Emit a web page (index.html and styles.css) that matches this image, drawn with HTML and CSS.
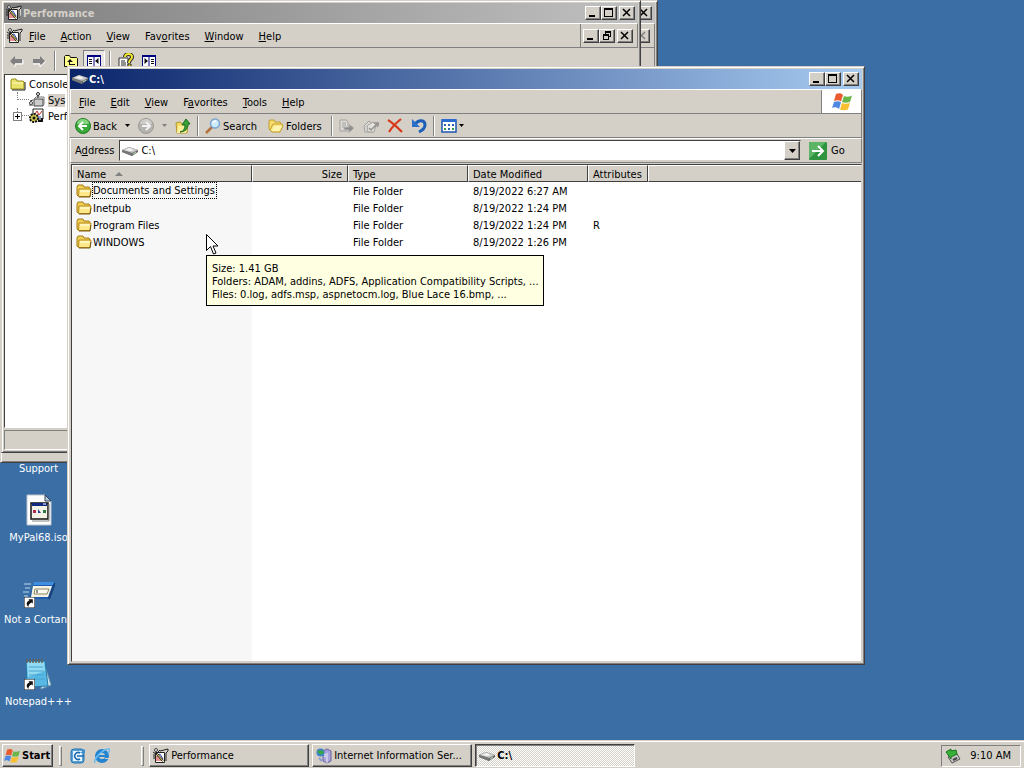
FILE: index.html
```html
<!DOCTYPE html>
<html lang="en">
  <head>
    <meta charset="UTF-8" />
    <meta name="viewport" content="width=device-width, initial-scale=1.0" />
    <title>C:\</title>
    <link rel="stylesheet" href="styles.css">
  </head>
  <body>
    <svg class="sprites" aria-hidden="true">
      <symbol id="min" viewBox="0 0 12 10"><path d="M2 7h6v2H2z" fill="currentColor" /></symbol>
      <symbol id="max" viewBox="0 0 12 10"><path d="M1 0h9v9H1zM2 2v6h7V2z" fill="currentColor" fill-rule="evenodd" /></symbol>
      <symbol id="restore" viewBox="0 0 12 10"><path d="M4 0h6v6H8v3H2V3h2zM5 2v1h3v2h1V2zM3 5v3h4V5z" fill="currentColor" fill-rule="evenodd" /></symbol>
      <symbol id="close" viewBox="0 0 12 10"><path d="M2 1l7 7M9 1L2 8" stroke="currentColor" stroke-width="1.500" /></symbol>
      <symbol id="down" viewBox="0 0 7 4"><path d="M0 0h7L3.500 4z" fill="currentColor" /></symbol>

      <symbol id="perf" viewBox="0 0 16 16">
        <path d="M4 3h8l3-2v9l-3 4z" fill="#d8d4cc" />
        <path d="M2.500 4.500h9v10h-9z" fill="#fff" stroke="#222" />
        <path d="M4 13V8h2v5M8 13v-3" fill="none" stroke="#d02020" />
        <path d="M4 7l3-1 3 5" fill="none" stroke="#3348b0" />
        <path d="M3 5l7 8" stroke="#222" stroke-width="2" />
        <path d="M4 6l6 7" stroke="#f0e060" />
        <path d="M0 4l3 2 2-2 2-2M1 11V6" fill="none" stroke="#222" />
        <circle cx="3" cy="2" r="1.500" fill="#eee" stroke="#444" />
        <path d="M7 3l4-1 4-1v2l-2 2v8" fill="none" stroke="#222" />
      </symbol>
      <symbol id="drive" viewBox="0 0 16 16">
        <path d="M0 7l7-3 9 3v2l-6 4-10-4z" fill="#666" />
        <path d="M0 7l7-3 9 3-6 3z" fill="#c6c6c6" />
        <path d="M3 7l4-2 5 2-3 1z" fill="#f6f6f6" />
        <path d="M0 7l10 3v3L0 9z" fill="#777" />
        <path d="M11 11l3-2" stroke="#bfe0bf" />
      </symbol>
      <symbol id="folder" viewBox="0 0 16 16">
        <path d="M1 12V4l1-2h5l1 2h5l1 2v7H2z" fill="#f0cf55" stroke="#a67c15" />
        <path d="M3 6h12l-1 7.500H2.500z" fill="#ffe88a" stroke="#b58a1d" />
        <path d="M4 7h10l-.3 2H4z" fill="#fff6bd" />
        <path d="M3 14h11l1-6" fill="none" stroke="#7a5a10" />
      </symbol>
      <symbol id="console" viewBox="0 0 16 16">
        <path d="M1 13V4l1-1h4l1 2h6l1 1v7z" fill="#e9e36b" stroke="#9a8c12" />
        <path d="M2 7h11" stroke="#fffcc0" />
        <path d="M2 14h13V6" fill="none" stroke="#222" />
      </symbol>
      <symbol id="monitor" viewBox="0 0 16 16">
        <path d="M5 7h9v7H5z" fill="#ccc" stroke="#444" />
        <path d="M5 7l2-2h8v7l-1 2" fill="none" stroke="#777" />
        <path d="M9 6V3" stroke="#222" />
        <circle cx="9" cy="2" r="1.500" fill="#fff" stroke="#222" />
        <path d="M1 9l3-1M0 13h4" stroke="#444" />
        <circle cx="2" cy="11" r="1.500" fill="#fff" stroke="#444" />
      </symbol>
      <symbol id="logs" viewBox="0 0 16 16">
        <path d="M4 1h10v10H4z" fill="#fff" stroke="#222" />
        <path d="M6 6l2-3 2 4 3-4" fill="none" stroke="#c22" />
        <path d="M6 9h6" stroke="#24c" />
        <circle cx="5" cy="10" r="4" fill="#d0c850" stroke="#111" stroke-width="2" stroke-dasharray="2 1" />
        <circle cx="5" cy="10" r="1.500" fill="#111" />
        <path d="M9 13h4v-3" fill="none" stroke="#111" stroke-width="2" />
      </symbol>
      <symbol id="larrow" viewBox="0 0 16 16"><path d="M2 8l5-5v3h7v4H7v3z" fill="#808080" /><path d="M7 14v-3h8V7" fill="none" stroke="#fff" /></symbol>
      <symbol id="rarrow" viewBox="0 0 16 16"><path d="M14 8L9 3v3H2v4h7v3z" fill="#808080" /><path d="M2 11h7v3l6-6" fill="none" stroke="#fff" /></symbol>
      <symbol id="upfolder" viewBox="0 0 16 16">
        <path d="M1.500 13.500v-10l1-1h4l1 2h6l1 1v8z" fill="#ffff8c" stroke="#111" />
        <path d="M6 12V9H4l3-3 3 3H7v2h5v1z" fill="#111" />
      </symbol>
      <symbol id="pane" viewBox="0 0 16 16">
        <path d="M1.500 2.500h13v11h-13z" fill="#fff" stroke="#000080" />
        <path d="M1 3h14" stroke="#000080" stroke-width="2" />
        <path d="M8 3v10" stroke="#000080" />
        <path d="M3 6.500h3M3 8.500h3M3 10.500h3" stroke="#111" />
        <path d="M12.500 5v6L9 8z" fill="#111" />
      </symbol>
      <symbol id="pane2" viewBox="0 0 16 16">
        <path d="M1.500 2.500h13v11h-13z" fill="#fff" stroke="#000080" />
        <path d="M1 3h14" stroke="#000080" stroke-width="2" />
        <path d="M8 3v10" stroke="#000080" />
        <path d="M10 6.500h3M10 8.500h3M10 10.500h3" stroke="#111" />
        <path d="M3.500 5v6L7 8z" fill="#111" />
      </symbol>
      <symbol id="helpdoc" viewBox="0 0 16 16">
        <path d="M1 5h9v10H1z" fill="#fff" stroke="#333" />
        <path d="M3 8h4M3 10h5M3 12h5" stroke="#222" />
        <path d="M7 4c0-4 7-4 7 0 0 3-3 2-3 6" fill="none" stroke="#222" stroke-width="4" />
        <path d="M7 4c0-4 7-4 7 0 0 3-3 2-3 6" fill="none" stroke="#f2e62e" stroke-width="2" />
        <path d="M10 11h3v3h-3z" fill="#f2e62e" stroke="#222" />
      </symbol>

      <symbol id="back" viewBox="0 0 16 16">
        <circle cx="8" cy="8" r="7.500" fill="#38a838" stroke="#207a24" />
        <path d="M2 6a6 5 0 0 1 12 0z" fill="#83d47f" />
        <path d="M12 8H5m3-4L4 8l4 4" fill="none" stroke="#fff" stroke-width="2" />
      </symbol>
      <symbol id="forward" viewBox="0 0 16 16">
        <circle cx="8" cy="8" r="7.500" fill="#b5b3af" stroke="#9a9893" />
        <path d="M2 6a6 5 0 0 1 12 0z" fill="#cfcdca" />
        <path d="M4 8h7M8 4l4 4-4 4" fill="none" stroke="#f2f2f2" stroke-width="2" />
      </symbol>
      <symbol id="up" viewBox="0 0 16 16">
        <path d="M1 5l4-1 2 2 6-1-1 10H2z" fill="#f5da62" stroke="#b3922a" />
        <path d="M3 8l10-1-2 8H2z" fill="#fdf09c" />
        <path d="M5 14c4-1 5-4 5-7H7l4-6 4 5h-2c0 5-3 8-8 8z" fill="#36a436" stroke="#1a6a1c" />
      </symbol>
      <symbol id="search" viewBox="0 0 16 16">
        <path d="M1 15l6-6" stroke="#b5713d" stroke-width="2.500" />
        <circle cx="10" cy="5.500" r="4.500" fill="#cdebfb" stroke="#7ba5cc" stroke-width="1.500" />
        <path d="M8 5a3 3 0 0 1 3-2" fill="none" stroke="#fff" stroke-width="1.500" />
      </symbol>
      <symbol id="folders" viewBox="0 0 16 16">
        <path d="M1 11V3l1-1h4l1 2h5l1 2-3 7H3z" fill="#f7dd6c" stroke="#c29c2b" />
        <path d="M5 6h9l1 2-3 6H4L2 12z" fill="#fbe681" stroke="#c29c2b" />
        <path d="M6 8h8l-3 5H4z" fill="#fff5b0" />
      </symbol>
      <symbol id="moveto" viewBox="0 0 16 16">
        <path d="M1 2h6l2 2v9H1z" fill="#dedcd8" stroke="#a3a19c" />
        <path d="M3 5h4M3 7h4M3 9h3" stroke="#a3a19c" />
        <path d="M5 9h5V6l5 4-5 5v-3H5z" fill="#8f8d89" stroke="#bbb" />
      </symbol>
      <symbol id="copyto" viewBox="0 0 16 16">
        <path d="M1 8l5-5 4 3v8H2z" fill="#d9d7d3" stroke="#a3a19c" />
        <path d="M4 8l6-4 3 3-2 7H5z" fill="#e4e2de" stroke="#a3a19c" />
        <path d="M6 10l2 2 6-6M11 5h5l-2 4" fill="none" stroke="#918f8b" stroke-width="1.500" />
      </symbol>
      <symbol id="delete" viewBox="0 0 16 16">
        <path d="M1 2c5 3 10 8 14 12M14 1C9 5 5 9 2 14" fill="none" stroke="#d8391a" stroke-width="2.200" />
      </symbol>
      <symbol id="undo" viewBox="0 0 16 16">
        <path d="M4 6c4-5 10-4 10 1 0 3-2 5-6 7" fill="none" stroke="#1c5fb8" stroke-width="3" />
        <path d="M1 1v8h8z" fill="#2a6fca" />
      </symbol>
      <symbol id="views" viewBox="0 0 16 16">
        <path d="M1 2h14v12H1z" fill="#fff" stroke="#1a55b0" stroke-width="1.500" />
        <path d="M1 1h14v3H1z" fill="#2a6cd0" />
        <path d="M3 6h2v2H3zM7 6h2v2H7zM11 6h2v2h-2zM7 10h2v2H7z" fill="#2d62b4" />
        <path d="M3 10h2v2H3zM11 10h2v2h-2z" fill="#3a9a4c" />
      </symbol>
      <symbol id="go" viewBox="0 0 18 18">
        <rect width="18" height="18" rx="1" fill="#2f9440" />
        <path d="M0 1l1-1h16L1 16H0z" fill="#5cb567" />
        <path d="M3 9h10M9 4l5 5-5 5" fill="none" stroke="#fff" stroke-width="2" />
      </symbol>
      <symbol id="flag" viewBox="0 0 20 18">
        <path d="M4 1c3-1 5-1 7 1L9 8.500C7 7 5 7 2 8z" fill="#ea5b30" />
        <path d="M12 3c2 1 5 1 8-.500L18 9c-3 1-6 1-8 0z" fill="#6ab648" />
        <path d="M2 9c3-1 5-1 7 .500L7 16c-2-2-5-2-7-1z" fill="#4f88e2" />
        <path d="M10 10c2 1 5 1 8 0l-2 6.500c-3 1-6 1-8 0z" fill="#f8c030" />
      </symbol>
      <symbol id="iis" viewBox="0 0 16 16">
        <path d="M7 3l4-2 4 2v10l-4 2-4-2z" fill="#a9a3dd" stroke="#69649c" />
        <path d="M11 5v10M8 6l2 1M8 8l2 1" stroke="#eee" />
        <circle cx="4.500" cy="4.500" r="4" fill="#3e83ce" />
        <path d="M1 4c2-4 4 0 6-2l1 3-3 2z" fill="#39a34a" />
        <path d="M3 10l3 3" stroke="#8a9cd0" stroke-width="2" />
      </symbol>
      <symbol id="outlook" viewBox="0 0 16 16">
        <rect x="1" y="1" width="13" height="14" rx="3" fill="#5aa2d8" stroke="#2673af" />
        <path d="M3 3h9v10H3z" fill="#e9f6ff" />
        <path d="M10 5a3.500 3.500 0 1 0 0 6M7 8h7" fill="none" stroke="#1d69ad" stroke-width="1.500" />
        <path d="M10 5l5-4v4z" fill="#3d8fcf" />
      </symbol>
      <symbol id="ie" viewBox="0 0 16 16">
        <circle cx="8" cy="8" r="5" fill="none" stroke="#2584d0" stroke-width="4" />
        <path d="M4 8h9" stroke="#2584d0" stroke-width="2" />
        <path d="M11 10h5v1h-5z" fill="#d4d0c8" />
        <path d="M1 15C-1 11 10 0 15 1c1 1 0 3-1 4" fill="none" stroke="#6cbcf0" stroke-width="1.500" />
      </symbol>
      <symbol id="eject" viewBox="0 0 16 16">
        <path d="M3 9l9-3 3 5-8 4z" fill="#c4c4c4" stroke="#555" />
        <path d="M8 12l4-2" stroke="#444" stroke-width="2" />
        <path d="M1 4l5-3v2l5-1 1 4-6 3v2z" fill="#37b137" stroke="#1c7420" />
      </symbol>
      <symbol id="iso" viewBox="0 0 32 32">
        <path d="M4 1h18l6 6v24H4z" fill="#fff" stroke="#bcc4cc" />
        <path d="M22 1v6h6z" fill="#b5c7d8" stroke="#345" />
        <path d="M8 9h17v16H8z" fill="#f5f3e6" stroke="#111" stroke-width="1.500" />
        <path d="M9 9h15v3H9z" fill="#102a80" />
        <path d="M20 10h3" stroke="#fff" />
        <path d="M10 16h3v3h-3z" fill="#b02858" /><path d="M15 15l3 4h-3z" fill="#243c9c" /><path d="M20 16h3v3h-3z" fill="#287a44" />
        <path d="M26 10v17H9" fill="none" stroke="#888" />
      </symbol>
      <symbol id="shortcut" viewBox="0 0 10 10">
        <path d="M0 0h10v10H0z" fill="#fff" stroke="#111" />
        <path d="M4 2h4v4L7 5C5 6 4 7 4 9 1 6 3 4 5 3z" fill="#111" />
      </symbol>
      <symbol id="run" viewBox="0 0 32 32">
        <path d="M11 6h21l-6 17H6z" fill="#1f5cae" />
        <path d="M11 6h20l-1 3H10z" fill="#408fe0" />
        <path d="M10 10h19l-4 11H8z" fill="#f5f3e4" />
        <path d="M12 13h14l-2 5H11z" fill="#fffdf1" stroke="#8b8660" />
        <path d="M14 14v3" stroke="#222" />
        <path d="M1 8h7M2 12h5M0 16h6M1 20h4" stroke="#bcd7f2" />
        <path d="M26 23l6-16" stroke="#183e72" stroke-width="2" />
        <use href="#shortcut" x="1" y="21" width="11" height="11" />
      </symbol>
      <symbol id="notepad" viewBox="0 0 32 32">
        <path d="M21 5l7 22-10 4z" fill="#d7ebf5" stroke="#789cb5" />
        <path d="M3 3h19l3 25-21 1z" fill="#58b8e4" stroke="#2878a4" />
        <path d="M4 4h17l1 9-17 6z" fill="#91daf2" />
        <path d="M6 9h14M6 13h15M6 17h15M6 21h16" stroke="#49a5d0" />
        <path d="M4 1v4m3-4v4m3-4v4m3-4v4m3-4v4m3-4v4" stroke="#6b5f58" stroke-width="1.500" />
        <use href="#shortcut" x="1" y="21" width="11" height="11" />
      </symbol>
    </svg>

    <main class="desktop">
      <a class="shortcut support" href="#">Support</a>
      <a class="shortcut mypal" href="#"><svg><use href="#iso" /></svg>MyPal68.iso</a>
      <a class="shortcut cortana" href="#"><svg><use href="#run" /></svg>Not a Cortana</a>
      <a class="shortcut npp" href="#"><svg><use href="#notepad" /></svg>Notepad+++</a>

      <section class="window behind">
        <header class="title">
          <div class="caption">
            <button aria-label="Close"><svg><use href="#close" /></svg></button>
          </div>
        </header>
        <div class="menubar">
          <div class="caption child">
            <button aria-label="Close child" disabled><svg><use href="#close" /></svg></button>
          </div>
        </div>
        <div class="fill"></div>
      </section>

      <section class="window performance">
        <header class="title">
          <svg class="icon"><use href="#perf" /></svg>
          <h2>Performance</h2>
          <div class="caption">
            <button aria-label="Minimize"><svg><use href="#min" /></svg></button>
            <button aria-label="Maximize"><svg><use href="#max" /></svg></button>
            <button aria-label="Close"><svg><use href="#close" /></svg></button>
          </div>
        </header>
        <nav class="menubar">
          <svg class="icon"><use href="#perf" /></svg>
          <button><span><u>F</u>ile</span></button>
          <button><span><u>A</u>ction</span></button>
          <button><span><u>V</u>iew</span></button>
          <button><span>Fav<u>o</u>rites</span></button>
          <button><span><u>W</u>indow</span></button>
          <button><span><u>H</u>elp</span></button>
          <div class="caption child">
            <button aria-label="Minimize child"><svg><use href="#min" /></svg></button>
            <button aria-label="Restore child"><svg><use href="#restore" /></svg></button>
            <button aria-label="Close child"><svg><use href="#close" /></svg></button>
          </div>
        </nav>
        <div class="tools">
          <button aria-label="Back"><svg class="icon"><use href="#larrow" /></svg></button>
          <button aria-label="Forward"><svg class="icon"><use href="#rarrow" /></svg></button>
          <i class="sep"></i>
          <button aria-label="Up"><svg class="icon"><use href="#upfolder" /></svg></button>
          <button class="pressed" aria-label="Console tree"><svg class="icon"><use href="#pane" /></svg></button>
          <i class="sep"></i>
          <button aria-label="Help"><svg class="icon"><use href="#helpdoc" /></svg></button>
          <button aria-label="Action pane"><svg class="icon"><use href="#pane2" /></svg></button>
        </div>
        <ul class="tree">
          <li><svg class="icon"><use href="#console" /></svg><span>Console</span></li>
          <li class="leaf selected"><svg class="icon"><use href="#monitor" /></svg><span>Sys</span></li>
          <li class="leaf"><button class="expand" aria-label="Expand"></button><svg class="icon"><use href="#logs" /></svg><span>Perf</span></li>
        </ul>
        <footer class="status"></footer>
      </section>

      <section class="window explorer">
        <header class="title active">
          <svg class="icon"><use href="#drive" /></svg>
          <h1>C:\</h1>
          <div class="caption">
            <button aria-label="Minimize"><svg><use href="#min" /></svg></button>
            <button aria-label="Maximize"><svg><use href="#max" /></svg></button>
            <button aria-label="Close"><svg><use href="#close" /></svg></button>
          </div>
        </header>
        <nav class="menubar">
          <button><span><u>F</u>ile</span></button>
          <button><span><u>E</u>dit</span></button>
          <button><span><u>V</u>iew</span></button>
          <button><span>F<u>a</u>vorites</span></button>
          <button><span><u>T</u>ools</span></button>
          <button><span><u>H</u>elp</span></button>
          <div class="brand"><svg><use href="#flag" /></svg></div>
        </nav>
        <div class="toolbar">
          <button><svg class="icon"><use href="#back" /></svg><span>Back</span></button>
          <button class="drop" aria-label="Back history"><svg class="arrow"><use href="#down" /></svg></button>
          <button aria-label="Forward"><svg class="icon"><use href="#forward" /></svg></button>
          <button class="drop" aria-label="Forward history" disabled><svg class="arrow"><use href="#down" /></svg></button>
          <button aria-label="Up"><svg class="icon"><use href="#up" /></svg></button>
          <i class="sep"></i>
          <button class="wide"><svg class="icon"><use href="#search" /></svg><span>Search</span></button>
          <button class="wide"><svg class="icon"><use href="#folders" /></svg><span>Folders</span></button>
          <i class="sep"></i>
          <button aria-label="Move to"><svg class="icon"><use href="#moveto" /></svg></button>
          <button aria-label="Copy to"><svg class="icon"><use href="#copyto" /></svg></button>
          <button aria-label="Delete"><svg class="icon"><use href="#delete" /></svg></button>
          <button aria-label="Undo"><svg class="icon"><use href="#undo" /></svg></button>
          <i class="sep"></i>
          <button class="views" aria-label="Views"><svg class="icon"><use href="#views" /></svg><svg class="arrow"><use href="#down" /></svg></button>
        </div>
        <form class="address">
          <label for="path">A<u>d</u>dress</label>
          <div class="combo">
            <svg class="icon"><use href="#drive" /></svg>
            <input id="path" type="text" value="C:\" />
            <button type="button" aria-label="Show addresses"><svg class="arrow"><use href="#down" /></svg></button>
          </div>
          <button class="go"><svg><use href="#go" /></svg>Go</button>
        </form>
        <div class="list">
          <table>
            <colgroup>
              <col class="c-name" /><col class="c-size" /><col class="c-type" /><col class="c-date" /><col class="c-attr" /><col />
            </colgroup>
            <thead>
              <tr><th>Name<i class="sort"></i></th><th class="num">Size</th><th>Type</th><th>Date Modified</th><th>Attributes</th><th></th></tr>
            </thead>
            <tbody>
              <tr><td><div class="file"><svg class="icon"><use href="#folder" /></svg><span class="focus">Documents and Settings</span></div></td><td></td><td>File Folder</td><td>8/19/2022 6:27 AM</td><td></td><td></td></tr>
              <tr><td><div class="file"><svg class="icon"><use href="#folder" /></svg><span>Inetpub</span></div></td><td></td><td>File Folder</td><td>8/19/2022 1:24 PM</td><td></td><td></td></tr>
              <tr><td><div class="file"><svg class="icon"><use href="#folder" /></svg><span>Program Files</span></div></td><td></td><td>File Folder</td><td>8/19/2022 1:24 PM</td><td>R</td><td></td></tr>
              <tr><td><div class="file"><svg class="icon"><use href="#folder" /></svg><span>WINDOWS</span></div></td><td></td><td>File Folder</td><td>8/19/2022 1:26 PM</td><td></td><td></td></tr>
            </tbody>
          </table>
        </div>
      </section>

      <div class="tooltip" role="tooltip">
        Size: 1.41 GB<br />
        Folders: ADAM, addins, ADFS, Application Compatibility Scripts, ...<br />
        Files: 0.log, adfs.msp, aspnetocm.log, Blue Lace 16.bmp, ...
      </div>
      <svg class="pointer" viewBox="0 0 12 21"><path d="M.5.500v16l4-4 3 7.500 2.500-1-3-7h5z" fill="#fff" stroke="#000" /></svg>
    </main>

    <footer class="taskbar">
      <button class="start"><svg><use href="#flag" /></svg>Start</button>
      <i class="grip"></i>
      <div class="quick">
        <button aria-label="Outlook Express"><svg class="icon"><use href="#outlook" /></svg></button>
        <button aria-label="Internet Explorer"><svg class="icon"><use href="#ie" /></svg></button>
      </div>
      <i class="grip"></i>
      <div class="tasks">
        <button><svg class="icon"><use href="#perf" /></svg>Performance</button>
        <button><svg class="icon"><use href="#iis" /></svg>Internet Information Ser...</button>
        <button class="current"><svg class="icon"><use href="#drive" /></svg>C:\</button>
      </div>
      <div class="tray">
        <svg class="icon"><use href="#eject" /></svg>
        <time>9:10 AM</time>
      </div>
    </footer>
  </body>
</html>
```

FILE: styles.css
```css
:root {
  --face: #d4d0c8;
  --shadow: #808080;
  --dark: #404040;
  --desk: #3a6ea5;
}

* {
  box-sizing: border-box;
}

body {
  margin: 0;
  height: 100vh;
  display: flex;
  flex-direction: column;
  overflow: hidden;
  background: var(--desk);
  color: #000;
  font: 11px/13px "DejaVu Sans Condensed", "DejaVu Sans", sans-serif;
  white-space: nowrap;
}

button,
input {
  font: inherit;
  color: inherit;
  border: 0;
  padding: 0;
  background: none;
}

button {
  display: flex;
  align-items: center;
}

svg {
  display: block;
  flex: none;
}

u {
  text-underline-offset: 1px;
}

.sprites {
  position: absolute;
  width: 0;
  height: 0;
}

.icon {
  width: 16px;
  height: 16px;
}

.arrow {
  width: 5px;
  height: 3px;
}

/* desktop */
.desktop {
  position: relative;
  flex: 1;
  overflow: hidden;
}

.shortcut {
  position: absolute;
  left: 0;
  width: 77px;
  display: flex;
  flex-direction: column;
  align-items: center;
  gap: 5px;
  color: #fff;
  text-decoration: none;
}

.shortcut svg {
  width: 32px;
  height: 32px;
}

.support { top: 462px; }
.mypal { top: 494px; }
.cortana { top: 576px; }
.npp { top: 658px; }

/* windows */
.window {
  position: absolute;
  display: flex;
  flex-direction: column;
  padding: 2px;
  background: var(--face);
  border: 1px solid;
  border-color: var(--face) var(--dark) var(--dark) var(--face);
  box-shadow: inset 1px 1px #fff, inset -1px -1px var(--shadow);
}

.behind {
  top: 0;
  left: 0;
  right: 366px;
  bottom: 277px;
}

.performance {
  top: 0;
  left: 1px;
  right: 383px;
  bottom: 287px;
}

.explorer {
  top: 66px;
  left: 67px;
  right: 159px;
  bottom: 75px;
}

.title {
  display: flex;
  align-items: center;
  gap: 1px;
  height: 20px;
  padding: 0 3px 0 2px;
  background: linear-gradient(to right, #808080, #c0c0c0);
  color: var(--face);
}

.title.active {
  background: linear-gradient(to right, #0a246a, #a6caf0);
  color: #fff;
}

.title h1,
.title h2 {
  margin: 0;
  font-size: 11px;
}

.caption {
  display: flex;
  margin-left: auto;
}

.caption button,
.combo button {
  justify-content: center;
  width: 16px;
  height: 14px;
  background: var(--face);
  color: #000;
  border: 1px solid;
  border-color: #fff var(--dark) var(--dark) #fff;
  box-shadow: inset -1px -1px var(--shadow);
}

.caption button:last-child {
  margin-left: 2px;
}

.caption button:disabled {
  color: var(--shadow);
}

.caption svg {
  width: 12px;
  height: 10px;
}

.menubar {
  display: flex;
  align-items: center;
  gap: 15px;
  height: 25px;
  padding-left: 8px;
  border: 1px solid;
  border-color: #fff var(--shadow) var(--shadow) #fff;
}

.menubar span,
.toolbar span {
  padding-top: 1px;
}

.child {
  align-self: stretch;
  align-items: center;
  padding: 0 4px 0 2px;
  border-left: 1px solid var(--shadow);
}

.performance .menubar {
  padding-left: 2px;
}

.performance .menubar .icon {
  margin-right: -9px;
}

.fill {
  flex: 1;
  border-right: 1px solid var(--shadow);
}

.tools {
  display: flex;
  align-items: center;
  gap: 7px;
  height: 26px;
  padding: 0 4px;
}

.tools .pressed {
  margin: 0 -3px;
  padding: 2px;
  background: #e9e7e3;
  border: 1px solid;
  border-color: var(--shadow) #fff #fff var(--shadow);
}

.sep {
  width: 2px;
  height: 20px;
  border-left: 1px solid var(--shadow);
  border-right: 1px solid #fff;
}

.tree {
  flex: 1;
  margin: 0;
  padding: 1px 5px;
  list-style: none;
  overflow: hidden;
  background: #fff;
  border: 1px solid;
  border-color: var(--dark) #fff #fff var(--dark);
}

.tree li {
  display: flex;
  align-items: center;
  gap: 3px;
  height: 16px;
}

.leaf {
  position: relative;
  padding-left: 19px;
}

.leaf::before {
  content: "";
  position: absolute;
  top: 0;
  bottom: 8px;
  left: 7px;
  width: 11px;
  border: dotted var(--shadow);
  border-width: 0 0 1px 1px;
}

.selected span {
  background: var(--face);
}

.expand {
  position: absolute;
  left: 3px;
  width: 9px;
  height: 9px;
  border: 1px solid var(--shadow);
  background:
    linear-gradient(#000, #000) center / 5px 1px no-repeat,
    linear-gradient(#000, #000) center / 1px 5px no-repeat,
    #fff;
}

.status {
  height: 20px;
  margin-top: 2px;
  border: 1px solid;
  border-color: var(--shadow) #fff #fff var(--shadow);
}

/* explorer */
.brand {
  align-self: stretch;
  display: grid;
  place-items: center;
  width: 40px;
  margin-left: auto;
  background: #fff;
  border-left: 1px solid var(--shadow);
}

.brand svg {
  width: 20px;
  height: 18px;
}

.toolbar {
  display: flex;
  align-items: center;
  gap: 8px;
  height: 24px;
  padding-left: 5px;
  border-right: 1px solid var(--shadow);
  border-bottom: 1px solid var(--shadow);
}

.toolbar button {
  gap: 2px;
}

.toolbar .wide {
  padding-right: 3px;
}

.toolbar .drop:disabled {
  color: var(--shadow);
}

.toolbar .sep {
  margin: 0 -2px;
}

.address {
  display: flex;
  align-items: center;
  gap: 5px;
  height: 25px;
  padding-left: 4px;
  border: 1px solid;
  border-color: #fff var(--shadow) var(--shadow) #fff;
}

.combo {
  flex: 1;
  display: flex;
  align-items: center;
  gap: 3px;
  height: 21px;
  padding-left: 2px;
  background: #fff;
  border: 1px solid;
  border-color: var(--dark) var(--face) var(--face) var(--dark);
}

.combo input {
  flex: 1;
  min-width: 0;
}

.combo button {
  height: 19px;
}

.combo .arrow {
  width: 7px;
  height: 4px;
}

.go {
  gap: 4px;
  width: 55px;
  padding-left: 3px;
}

.go svg {
  width: 18px;
  height: 18px;
}

.list {
  flex: 1;
  margin: 1px 0 0 1px;
  overflow: hidden;
  border: 1px solid;
  border-color: var(--dark) var(--face) var(--face) var(--dark);
  background: linear-gradient(to right, #f7f7f7 180px, #fff 180px);
}

table {
  width: 100%;
  table-layout: fixed;
  border-collapse: separate;
  border-spacing: 0;
}

.c-name { width: 180px; }
.c-size { width: 96px; }
.c-type,
.c-date { width: 120px; }
.c-attr { width: 60px; }

th {
  height: 17px;
  padding: 1px 5px 0 4px;
  background: var(--face);
  border: 1px solid;
  border-color: #fff var(--dark) var(--dark) #fff;
  font-weight: normal;
  text-align: left;
}

th:last-child {
  border-right: 0;
}

.num {
  text-align: right;
}

.sort {
  display: inline-block;
  margin-left: 9px;
  border: solid transparent;
  border-width: 0 4px 4px;
  border-bottom-color: var(--shadow);
  vertical-align: 2px;
}

td {
  height: 17px;
  padding: 1px 5px 0;
}

td:first-child {
  padding: 0 4px;
}

.file {
  display: flex;
  align-items: center;
  height: 17px;
}

.file span {
  padding: 2px 1px 0;
}

.file .focus {
  padding: 1px 1px 1px 0;
  border: 1px dotted #000;
}

.tooltip {
  position: absolute;
  top: 255px;
  left: 206px;
  padding: 6px 4px 4px 5px;
  background: #ffffe1;
  border: 1px solid #000;
}

.pointer {
  position: absolute;
  top: 234px;
  left: 206px;
  width: 12px;
  height: 21px;
}

/* taskbar */
.taskbar {
  display: flex;
  align-items: center;
  height: 28px;
  padding: 2px 3px 0 2px;
  background: var(--face);
  border-top: 1px solid var(--face);
  box-shadow: inset 0 1px #fff;
}

.start,
.tasks button {
  height: 23px;
  gap: 2px;
  padding: 0 3px;
  border: 1px solid;
  border-color: #fff var(--dark) var(--dark) #fff;
  box-shadow: inset -1px -1px var(--shadow);
}

.start {
  font-weight: bold;
  padding: 0 2px 0 1px;
}

.start svg {
  width: 16px;
  height: 16px;
}

.grip {
  width: 3px;
  height: 20px;
  margin: 0 5px 0 6px;
  border: 1px solid;
  border-color: #fff var(--shadow) var(--shadow) #fff;
}

.quick {
  display: flex;
  gap: 8px;
  width: 68px;
  padding-left: 3px;
}

.tasks {
  flex: 1;
  display: flex;
  gap: 3px;
}

.tasks button {
  flex: 0 1 160px;
}

.tasks .current {
  font-weight: bold;
  background: repeating-conic-gradient(#fff 0 25%, var(--face) 0 50%) 0 0 / 2px 2px;
  border-color: var(--dark) #fff #fff var(--dark);
  box-shadow: inset 1px 1px var(--shadow);
}

.tray {
  display: flex;
  align-items: center;
  gap: 9px;
  height: 22px;
  padding: 0 9px 0 3px;
  border: 1px solid;
  border-color: var(--shadow) #fff #fff var(--shadow);
}
```
